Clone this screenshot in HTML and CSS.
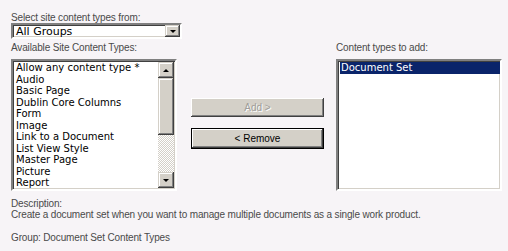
FILE: index.html
```html
<!DOCTYPE html>
<html lang="en">
<head>
    <meta charset="UTF-8">
    <title>Add Content Types</title>
    <link rel="stylesheet" href="styles.css">
</head>
<body>
    <div class="page">
        <div class="label">Select site content types from:</div>
        <div class="dropdown">
            <span class="dropdown-text">All Groups</span>
            <span class="arrow-btn"><span class="tri-down"></span></span>
        </div>

        <div class="pickers">
            <div class="column">
                <div class="label">Available Site Content Types:</div>
                <div class="listbox">
                    <div class="items">
                        <div class="item">Allow any content type *</div>
                        <div class="item">Audio</div>
                        <div class="item">Basic Page</div>
                        <div class="item">Dublin Core Columns</div>
                        <div class="item">Form</div>
                        <div class="item">Image</div>
                        <div class="item">Link to a Document</div>
                        <div class="item">List View Style</div>
                        <div class="item">Master Page</div>
                        <div class="item">Picture</div>
                        <div class="item">Report</div>
                        <div class="item">Rich Media Asset</div>
                    </div>
                    <div class="scrollbar">
                        <span class="arrow-btn"><span class="tri-up"></span></span>
                        <span class="thumb"></span>
                        <span class="track"></span>
                        <span class="arrow-btn"><span class="tri-down"></span></span>
                    </div>
                </div>
            </div>

            <div class="actions">
                <button type="button" class="btn" disabled>Add &gt;</button>
                <button type="button" class="btn btn-default">&lt; Remove</button>
            </div>

            <div class="column">
                <div class="label">Content types to add:</div>
                <div class="listbox">
                    <div class="items">
                        <div class="item selected">Document Set</div>
                    </div>
                </div>
            </div>
        </div>

        <div class="description">
            <div class="label">Description:</div>
            <div class="label">Create a document set when you want to manage multiple documents as a single work product.</div>
            <div class="label group">Group: Document Set Content Types</div>
        </div>
    </div>
</body>
</html>
```

FILE: styles.css
```css
body {
    margin: 0;
    background: #f7f4f7;
    font-family: "Liberation Sans", Arial, sans-serif;
}

.page {
    padding: 12px 0 0 11px;
}

.label {
    font-size: 10px;
    line-height: 11px;
    letter-spacing: -0.15px;
    color: #4a4a4a;
}

.dropdown {
    display: flex;
    align-items: stretch;
    width: 167px;
    height: 12px;
    margin: 0 0 3px;
    border: 2px solid;
    border-color: #808080 #ffffff #ffffff #808080;
    box-shadow: inset 1px 1px #404040, inset -1px -1px #d4d0c8;
    background: #fff;
    font-family: "DejaVu Sans", Verdana, sans-serif;
    font-size: 11px;
    line-height: 12px;
}

.dropdown-text {
    flex: 1;
    padding-left: 3px;
    padding-top: 1px;
    color: #000;
}

.dropdown .arrow-btn {
    width: 15px;
    height: 12px;
}

.arrow-btn {
    display: flex;
    align-items: center;
    justify-content: center;
    width: 16px;
    height: 16px;
    box-sizing: border-box;
    background: #d4d0c8;
    box-shadow: inset -1px -1px #404040, inset 1px 1px #d4d0c8, inset -2px -2px #808080, inset 2px 2px #ffffff;
}

.tri-down, .tri-up {
    width: 0;
    height: 0;
    border-left: 3px solid transparent;
    border-right: 3px solid transparent;
}

.tri-down {
    border-top: 3px solid #000;
}

.tri-up {
    border-bottom: 3px solid #000;
}

.pickers {
    display: flex;
    align-items: flex-start;
}

.column {
    width: 166px;
}

.column .label {
    margin-bottom: 6px;
}

.listbox {
    display: flex;
    height: 128px;
    border: 2px solid;
    border-color: #808080 #ffffff #ffffff #808080;
    box-shadow: inset 1px 1px #404040, inset -1px -1px #d4d0c8;
    background: #fff;
    overflow: hidden;
}

.items {
    flex: 1;
    padding: 1px 0 0 2px;
    overflow: hidden;
    font-family: "DejaVu Sans", Verdana, sans-serif;
    font-size: 10px;
    line-height: 11.5px;
    color: #000;
}

.item {
    white-space: nowrap;
    padding-left: 1px;
}

.item.selected {
    background: #0a246a;
    color: #fff;
}

.scrollbar {
    display: flex;
    flex-direction: column;
    width: 16px;
    padding: 1px 1px 1px 0;
}

.thumb {
    height: 57px;
    background: #d4d0c8;
    box-shadow: inset -1px -1px #404040, inset 1px 1px #d4d0c8, inset -2px -2px #808080, inset 2px 2px #ffffff;
}

.track {
    flex: 1;
    background: repeating-conic-gradient(#ffffff 0 25%, #d4d0c8 0 50%) 0 0 / 2px 2px;
}

.actions {
    display: flex;
    flex-direction: column;
    gap: 11px;
    width: 133px;
    margin: 56px 12px 0 14px;
}

.btn {
    height: 19px;
    padding: 0;
    border: none;
    background: #d4d0c8;
    box-shadow: inset -1px -1px #404040, inset 1px 1px #ffffff, inset -2px -2px #808080;
    font-family: "Liberation Sans", Arial, sans-serif;
    font-size: 10px;
    color: #000;
}

.btn:disabled {
    color: #a09e99;
    text-shadow: 1px 1px #ffffff;
}

.btn-default {
    height: 21px;
    border: 1px solid #000;
}

.description {
    margin-top: 7px;
}

.group {
    margin-top: 12px;
}
```
